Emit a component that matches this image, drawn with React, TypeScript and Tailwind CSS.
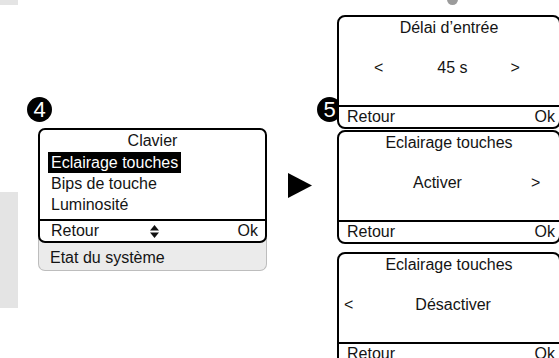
import type { ReactNode } from 'react';

function Badge({ n, className = '' }: { n: string; className?: string }) {
  return (
    <div
      className={`w-[25px] h-[25px] rounded-full bg-black text-white text-[22px] leading-none flex items-center justify-center ${className}`}
    >
      {n}
    </div>
  );
}

function Screen({ title, children, className = '' }: { title: string; children: ReactNode; className?: string }) {
  return (
    <div className={`relative z-10 shrink-0 border-2 border-black rounded-[8px] bg-white h-[114px] flex flex-col ${className}`}>
      <div className="pt-[1px] h-[21px] leading-[20px] text-center">{title}</div>
      <div className="mt-[20px] h-[20px] leading-[20px] flex">{children}</div>
      <div className="flex-1" />
      <div className="border-t-2 border-black h-[22px] leading-[20px] flex justify-between pl-[8px] pr-[4px]">
        <span>Retour</span>
        <span>Ok</span>
      </div>
    </div>
  );
}

function UpDown() {
  return (
    <svg width="9" height="13" viewBox="0 0 9 13" className="mt-[1px]">
      <polygon points="4.5,0 9,5.5 0,5.5" fill="#111" />
      <polygon points="0,7.5 9,7.5 4.5,13" fill="#111" />
    </svg>
  );
}

export default function App() {
  return (
    <div className="w-[559px] h-[358px] overflow-hidden bg-white flex font-['Liberation_Sans',Arial,sans-serif] text-[16px] text-[#141414]">
      {/* cut-off neighbours on the left edge */}
      <div className="w-[18px] shrink-0 flex flex-col">
        <div className="h-[5px] shrink-0 bg-[#e4e4e4]" />
        <div className="mt-[187px] h-[116px] shrink-0 bg-[#e4e4e4]" />
      </div>

      {/* step 4 */}
      <div className="ml-[9px] shrink-0 flex flex-col">
        <Badge n="4" className="mt-[97px] shrink-0" />
        <div className="ml-[11px] mt-[6px] w-[229px] shrink-0">
          <div className="relative z-10 border-2 border-black rounded-[7px] bg-white">
            <div className="h-[22px] leading-[22px] text-center">Clavier</div>
            <div className="h-[21px] leading-[21px] pl-[11px]">
              <span className="inline-block bg-black text-white px-[3px] -ml-[3px]">Eclairage touches</span>
            </div>
            <div className="h-[21px] leading-[21px] pl-[11px]">Bips de touche</div>
            <div className="h-[21px] leading-[21px] pl-[11px]">Luminosité</div>
            <div className="h-[4px]" />
            <div className="border-t-2 border-black h-[22px] leading-[20px] flex items-center pl-[11px] pr-[7px]">
              <span className="flex-1">Retour</span>
              <UpDown />
              <span className="flex-1 text-right">Ok</span>
            </div>
          </div>
          <div className="-mt-[10px] pt-[15px] pb-[2px] pl-[11px] leading-[20px] border-x border-b border-[#bdbdbd] rounded-b-[7px] bg-[#ebebeb]">
            Etat du système
          </div>
        </div>
      </div>

      {/* arrow */}
      <div className="ml-[21px] mt-[173px] shrink-0">
        <svg width="24" height="25" viewBox="0 0 24 25">
          <polygon points="0,0 24,12.5 0,25" fill="#000" />
        </svg>
      </div>

      {/* step 5 */}
      <div className="relative ml-[25px] w-[224px] shrink-0 flex flex-col">
        <div className="ml-[110px] -mt-[6px] w-[11px] h-[11px] shrink-0 rounded-full bg-[#9b9b9b]" />
        <Badge n="5" className="absolute left-[-20px] top-[97px] z-0" />
        <Screen title="Délai d’entrée" className="mt-[10px]">
          <span className="ml-[35px]">&lt;</span>
          <span className="ml-[54px]">45 s</span>
          <span className="ml-[43px]">&gt;</span>
        </Screen>
        <Screen title="Eclairage touches" className="mt-[1px]">
          <span className="ml-[74px]">Activer</span>
          <span className="ml-[69px]">&gt;</span>
        </Screen>
        <Screen title="Eclairage touches" className="mt-[8px]">
          <span className="ml-[5px]">&lt;</span>
          <span className="ml-[62px]">Désactiver</span>
        </Screen>
      </div>
    </div>
  );
}
